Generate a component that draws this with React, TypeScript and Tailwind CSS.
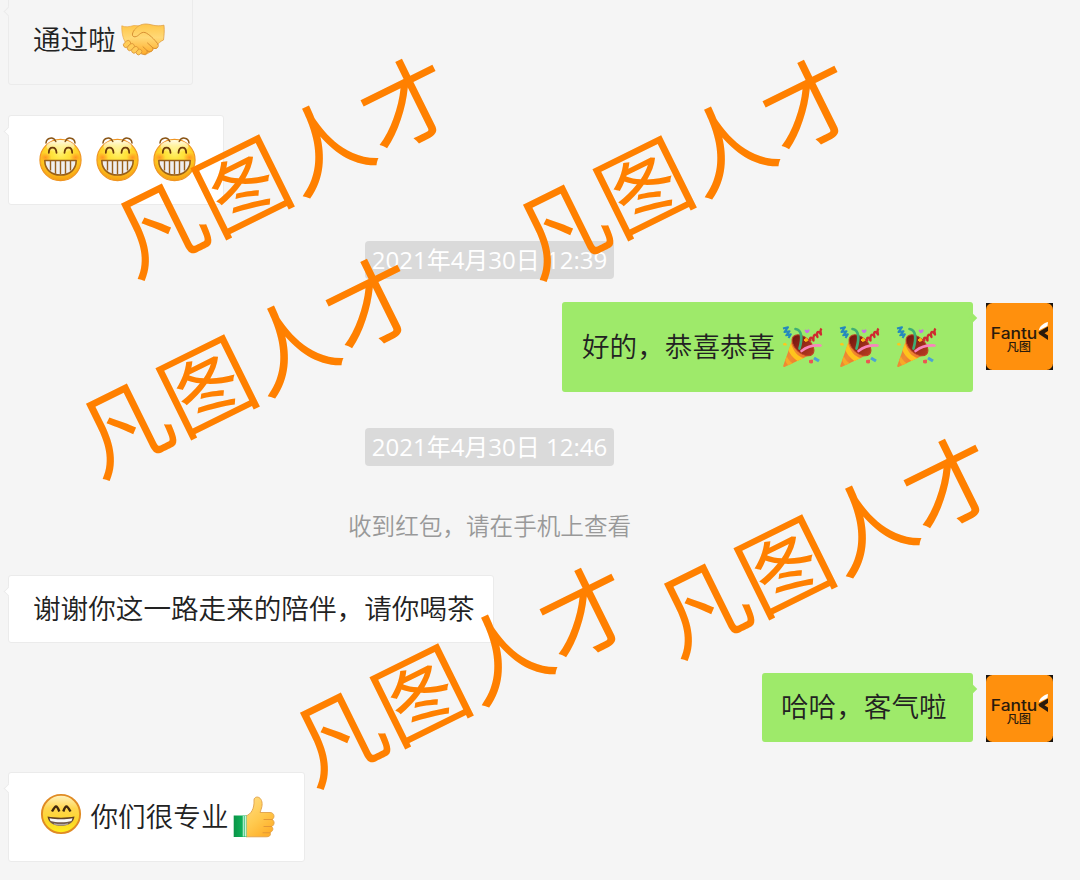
import type { ReactNode } from "react";

const FONT = "font-['Open_Sans','Noto_Sans_CJK_SC',sans-serif]";

const Grin = () => (
    <svg viewBox="0 0 43 46" className="w-[43px] h-[46px] shrink-0">
        <defs>
            <radialGradient id="grinFace" cx="50%" cy="30%" r="72%">
                <stop offset="0" stopColor="#fff27a" />
                <stop offset="0.25" stopColor="#ffe640" />
                <stop offset="0.65" stopColor="#ffcb22" />
                <stop offset="1" stopColor="#f59a10" />
            </radialGradient>
            <linearGradient id="grinShine" x1="0" y1="0" x2="0" y2="1">
                <stop offset="0" stopColor="#fff" stopOpacity="0.9" />
                <stop offset="1" stopColor="#fff" stopOpacity="0" />
            </linearGradient>
            <radialGradient id="grinCheek">
                <stop offset="0" stopColor="#ff8420" stopOpacity="0.75" />
                <stop offset="1" stopColor="#ff8420" stopOpacity="0" />
            </radialGradient>
        </defs>
        <circle cx="21.5" cy="24" r="20.6" fill="url(#grinFace)" stroke="#ef9422" strokeWidth="1.1" />
        <ellipse cx="21.5" cy="10.5" rx="14" ry="6.5" fill="url(#grinShine)" />
        <ellipse cx="6.5" cy="21.5" rx="6" ry="5" fill="url(#grinCheek)" />
        <ellipse cx="36.5" cy="21.5" rx="6" ry="5" fill="url(#grinCheek)" />
        <path d="M7 7C7.5 1.5 14.5 .2 16.8 5.5M26.2 5.5C28.5.2 35.5 1.5 36 7" fill="none" stroke="#8a5515" strokeWidth="1.5" strokeLinecap="round" />
        <path d="M9.8 16.8C10 10 17 10 17.5 16.8M25.5 16.8C26 10 33 10 33.2 16.8" fill="none" stroke="#6d3b0b" strokeWidth="1.8" strokeLinecap="round" />
        <path d="M5.8 24.5H37.2C37.2 34 30 39 21.5 39S5.8 34 5.8 24.5Z" fill="#efeeee" stroke="#99601a" strokeWidth="1.6" strokeLinejoin="round" />
        <path d="M11.5 24.5V34.5M16.5 24.5V37.7M21.5 24.5V38.5M26.5 24.5V37.7M31.5 24.5V34.5" stroke="#99601a" strokeWidth="1.4" />
    </svg>
);

const Laugh = () => (
    <svg viewBox="0 0 42 42" className="w-[42px] h-[42px] shrink-0">
        <defs>
            <linearGradient id="laughFace" x1="0" y1="0" x2="0" y2="1">
                <stop offset="0" stopColor="#fff3c0" />
                <stop offset="0.35" stopColor="#ffd650" />
                <stop offset="0.7" stopColor="#fcd628" />
                <stop offset="1" stopColor="#fff01c" />
            </linearGradient>
            <linearGradient id="laughMouth" x1="0" y1="0" x2="0" y2="1">
                <stop offset="0" stopColor="#5c3a18" />
                <stop offset="1" stopColor="#7d6a62" />
            </linearGradient>
        </defs>
        <circle cx="21" cy="21" r="19.1" fill="url(#laughFace)" stroke="#e08b24" strokeWidth="1.9" />
        <path d="M12 18.5C14 15 15 13.5 16 13.5S18 15 19.3 18.5M23.3 18.5C24.5 15 25.5 13.5 26.5 13.5S28.5 15 30.5 18.5" fill="none" stroke="#40280d" strokeWidth="2.4" strokeLinejoin="round" />
        <path d="M7.5 23.5C15 25 27 25 34.5 23.5C33.5 30 28.5 32.8 21 32.8S8.5 30 7.5 23.5Z" fill="url(#laughMouth)" />
        <path d="M9.5 25.2C16 26.5 26 26.5 32.5 25.2L31.5 28C26 29.8 16 29.8 10.5 28Z" fill="#f8f8f8" />
        <path d="M14 30.8C18 31.8 24 31.8 28 30.8" stroke="#b4a9a4" strokeWidth="1.2" fill="none" />
    </svg>
);

const Thumb = () => (
    <svg viewBox="0 0 42 42" className="w-[42px] h-[42px] shrink-0">
        <defs>
            <linearGradient id="thumbSkin" x1="0" y1="0" x2="0.6" y2="1">
                <stop offset="0" stopColor="#ffdc83" />
                <stop offset="0.6" stopColor="#ffc94e" />
                <stop offset="1" stopColor="#ffb12d" />
            </linearGradient>
            <linearGradient id="thumbCuff" x1="0" y1="0" x2="1" y2="0">
                <stop offset="0" stopColor="#0a9447" />
                <stop offset="1" stopColor="#10bd61" />
            </linearGradient>
        </defs>
        <path d="M13 20C18 18 21.5 13 21 4C21 .5 26.5-.5 28.5 4.5C30 8.5 28.5 12.500 27 16.500H37C41.500 16.500 42.200 22 39 23.500C42.200 25 41.500 29.500 38.500 30.500C41 32.500 39.800 35.500 37 36.500C38.500 39.500 36 40.800 33 40.800H13Z" fill="url(#thumbSkin)" stroke="#e0a04a" strokeWidth="0.9" />
        <path d="M31 23.500H39M31 30.500H38.500M30 36.700H37" stroke="#e39836" strokeWidth="1.100" strokeLinecap="round" />
        <path d="M.7 19.500H13.500V41H.7Z" fill="url(#thumbCuff)" />
        <path d="M10.600 20V40.500" stroke="#a9e8c6" strokeWidth="1.800" />
        <path d="M12.700 20V40.500" stroke="#e4f7ec" strokeWidth="1.200" />
    </svg>
);

const Handshake = () => (
    <svg viewBox="0 0 44 33" className="w-[44px] h-[33px] shrink-0">
        <defs>
            <linearGradient id="shakeSkin" x1="0" y1="0" x2="0" y2="1">
                <stop offset="0" stopColor="#ffc649" />
                <stop offset="0.45" stopColor="#ffd977" />
                <stop offset="1" stopColor="#ffad2b" />
            </linearGradient>
        </defs>
        <path d="M.8 2.8C4 4.5 8 3.8 13 2.5L20 3L27 9L35 19L31 28L24 32L17 28L6 22C3 18 .5 12 .8 2.8Z" fill="url(#shakeSkin)" stroke="#eaa749" strokeWidth="0.7" />
        <path d="M12 9C15 4 19 1 25 1C31 1.2 34 4 43 2.2C43.6 8 43 13 42.5 17C39 18.5 38 20 36.5 22C38 25 34.5 27 32.5 25.5C32.5 28.500 28.500 29.500 27 28C26.500 31.500 22.500 32 19 29.500L13 23C9 19 7 16 12 9Z" fill="url(#shakeSkin)" />
        <path d="M13 7.500C16 3.500 19.500 1 25 1C31 1.200 34 4 43 2.200C43.600 8 43 13 42.500 17C39 18.500 38 20 36.500 22" fill="none" stroke="#dfa045" strokeWidth="0.800" />
        <path d="M13 7.500C10.500 11 11 14 14 13.800C18 13.500 19 8.500 24 9.500C28 11 33.500 16.500 36.500 20.500C39 24.500 34.500 27 31.500 24.500L26.500 20M31.500 24.500C33.500 28 28.500 30 26 27.500L22 23.800M26 27.500C27.500 31 23 33 19 30" fill="none" stroke="#d58c30" strokeWidth="0.950" strokeLinecap="round" />
        <g fill="#ffcc58" stroke="#dc9436" strokeWidth="0.800">
            <rect x="2" y="18.500" width="8" height="5" rx="2.500" transform="rotate(-42 6 21)" />
            <rect x="5.800" y="21.600" width="8" height="5" rx="2.500" transform="rotate(-42 9.800 24.100)" />
            <rect x="10.200" y="24.300" width="7.500" height="5" rx="2.500" transform="rotate(-42 14 26.800)" />
            <rect x="15" y="26.800" width="6" height="4.500" rx="2.200" transform="rotate(-42 18 29)" />
        </g>
    </svg>
);

const Popper = () => (
    <svg viewBox="0 0 42 42" className="w-[42px] h-[42px] shrink-0">
        <defs>
            <linearGradient id="popperCone" x1="0" y1="0.3" x2="1" y2="0.8">
                <stop offset="0" stopColor="#e8793a" />
                <stop offset="0.35" stopColor="#f08c30" />
                <stop offset="0.65" stopColor="#ee7a2f" />
                <stop offset="1" stopColor="#d95f31" />
            </linearGradient>
            <linearGradient id="popperMouth" x1="0" y1="0" x2="1" y2="0">
                <stop offset="0" stopColor="#74170f" />
                <stop offset="1" stopColor="#b53a20" />
            </linearGradient>
        </defs>
        <path d="M11 12L1.300 39.500C1 41 2 41.300 3 40.800L31 27.500Z" fill="url(#popperCone)" />
        <path d="M9 17C11 25 16 31 22 32L15.500 35C10 31 7.500 27 6.500 24Z" fill="#ffc31d" />
        <path d="M4.800 30C6 33 8 36 10.800 37.300L6.500 39.300C4.800 38 3.800 36 3.300 34.500Z" fill="#f7a928" />
        <ellipse cx="21" cy="19.300" rx="13" ry="7.800" transform="rotate(43 21 19.300)" fill="url(#popperMouth)" stroke="#bd4324" strokeWidth="1" />
        <path d="M13.500 3C20 4 20.500 12 17.500 22.500" fill="none" stroke="#3fae75" strokeWidth="2.700" strokeLinecap="round" />
        <path d="M19.500 25C25 20.500 31 19 38.500 19.500" fill="none" stroke="#f984bd" strokeWidth="2.600" strokeLinecap="round" />
        <path d="M1 2.500L6 1.200L2.500 6L7.500 5.200L4.300 9.300L8.800 8.200L6.500 12" fill="none" stroke="#2589bd" strokeWidth="2.100" strokeLinejoin="round" />
        <path d="M28.500 15.500C27 12 29.500 9.500 31.500 14.500C31 9 33 6.500 35.500 11C34 5.500 36.500 4 39 8.500C38 5 38.500 3.500 39.500 2.500" fill="none" stroke="#cf2b30" strokeWidth="2.300" strokeLinejoin="round" />
        <path d="M23 4L25 4.500L27 3.800L26.800 5.800L25 6.800L23.800 6.200Z" fill="#c872e8" stroke="#c872e8" />
        <path d="M24.500 12L26 14.500L23.500 15.500L22 14Z" fill="#ffb514" stroke="#ffb514" />
        <path d="M1.500 17.800L3.500 17.200L4.500 19H1.800Z" fill="#ffc71c" stroke="#ffc71c" />
        <path d="M27.500 34.500L30.500 34L30.300 37L27.700 36.800Z" fill="#ee5352" stroke="#ee5352" />
        <path d="M32 32L37 35" stroke="#4ba3d4" strokeWidth="3.200" />
    </svg>
);

const Avatar = () => (
    <svg viewBox="0 0 67 67" className="w-[67px] h-[67px] shrink-0">
        <rect width="67" height="67" fill="#1a1410" />
        <rect width="67" height="67" rx="6.500" fill="#ff900d" />
        <text x="4.800" y="35.700" textLength="46.500" lengthAdjust="spacingAndGlyphs" fontSize="15.500" className="font-['Inter',sans-serif] font-medium" fill="#2a1a0c">Fantu</text>
        <path d="M62 23.500L52.500 29L53 31L62 37V32.500L58.500 30.200L62 28Z" fill="#2a1a0c" />
        <path d="M62 19C57 20.500 53.500 23 52.800 27.500L61.500 23Z" fill="#fff" />
        <text x="20.500" y="47.700" textLength="24.500" lengthAdjust="spacingAndGlyphs" fontSize="11.500" className="font-['Noto_Sans_CJK_SC',sans-serif] font-medium" fill="#2a1a0c">凡图</text>
    </svg>
);

const Incoming = ({ className, children }: { className: string; children: ReactNode }) => (
    <div className={`relative ml-2 flex items-center rounded-[3px] border border-[#ebebeb] ${className}`}>
        <span className="absolute -left-[4px] top-[12px] h-[7px] w-[7px] rotate-45 border-b border-l border-[#ebebeb] bg-inherit" />
        {children}
    </div>
);

const Outgoing = ({ className, children }: { className: string; children: ReactNode }) => (
    <div className="flex justify-end gap-[13px] pr-[27px]">
        <div className={`relative flex items-center rounded-[3px] bg-[#9eea6a] ${className}`}>
            <span className="absolute -right-[3px] top-[13px] h-[6px] w-[6px] rotate-45 bg-[#9eea6a]" />
            {children}
        </div>
        <div className="pt-[1.500px]">
            <Avatar />
        </div>
    </div>
);

const Stamp = ({ children }: { children: ReactNode }) => (
    <div className="ml-[365px] flex h-[38px] w-[249px] items-center justify-center rounded-[4px] bg-[#dadada] text-[24px] whitespace-nowrap text-white">
        {children}
    </div>
);

const Watermark = ({ className }: { className: string }) => (
    <div className={`absolute flex h-[100px] w-[400px] -translate-x-1/2 -translate-y-1/2 -rotate-[26.300deg] items-center justify-center text-[92px] leading-none whitespace-nowrap text-[#ff8000] ${className}`}>
        凡图人才
    </div>
);

export default function App() {
    return (
        <div className={`relative h-[880px] w-[1080px] overflow-hidden bg-[#f5f5f5] text-[27.600px] leading-none text-[#222] ${FONT}`}>
            <div className="flex flex-col">
                <Incoming className="-mt-[5px] h-[90px] w-[185px] bg-[#f5f5f5] pb-px pl-6">
                    <span className="font-[350]">通过啦</span>
                    <span className="ml-[5px]"><Handshake /></span>
                </Incoming>
                <Incoming className="mt-[30px] h-[90px] w-[216px] gap-[14px] bg-white pb-[2px] pl-[29.500px]">
                    <Grin />
                    <Grin />
                    <Grin />
                </Incoming>
                <div className="mt-[35.500px]"><Stamp>2021年4月30日 12:39</Stamp></div>
                <div className="mt-[23px]">
                    <Outgoing className="h-[90px] w-[411px] pl-5">
                        <span className="font-[350] whitespace-nowrap">好的，恭喜恭喜</span>
                        <span className="ml-[7px] flex gap-[15px]">
                            <Popper />
                            <Popper />
                            <Popper />
                        </span>
                    </Outgoing>
                </div>
                <div className="mt-[36.500px]"><Stamp>2021年4月30日 12:46</Stamp></div>
                <div className="mt-[49px] ml-[348px] h-6 text-[23.600px] font-[350] text-[#999]">收到红包，请在手机上查看</div>
                <Incoming className="mt-[36px] h-[68px] w-[486px] bg-white pb-px pl-6">
                    <span className="font-[350] whitespace-nowrap">谢谢你这一路走来的陪伴，请你喝茶</span>
                </Incoming>
                <div className="mt-[30px]">
                    <Outgoing className="h-[69px] w-[211px] pb-[2px] pl-[19px]">
                        <span className="font-[350]">哈哈，客气啦</span>
                    </Outgoing>
                </div>
                <Incoming className="mt-[30px] h-[90px] w-[297px] bg-white pb-px pl-[30.500px]">
                    <span className="pb-[5px]"><Laugh /></span>
                    <span className="ml-[9px] font-[350]">你们很专业</span>
                    <span className="ml-[5px]"><Thumb /></span>
                </Incoming>
            </div>
            <Watermark className="top-[165px] left-[283px]" />
            <Watermark className="top-[166px] left-[685px]" />
            <Watermark className="top-[365px] left-[248px]" />
            <Watermark className="top-[545px] left-[826px]" />
            <Watermark className="top-[674px] left-[462px]" />
        </div>
    );
}
